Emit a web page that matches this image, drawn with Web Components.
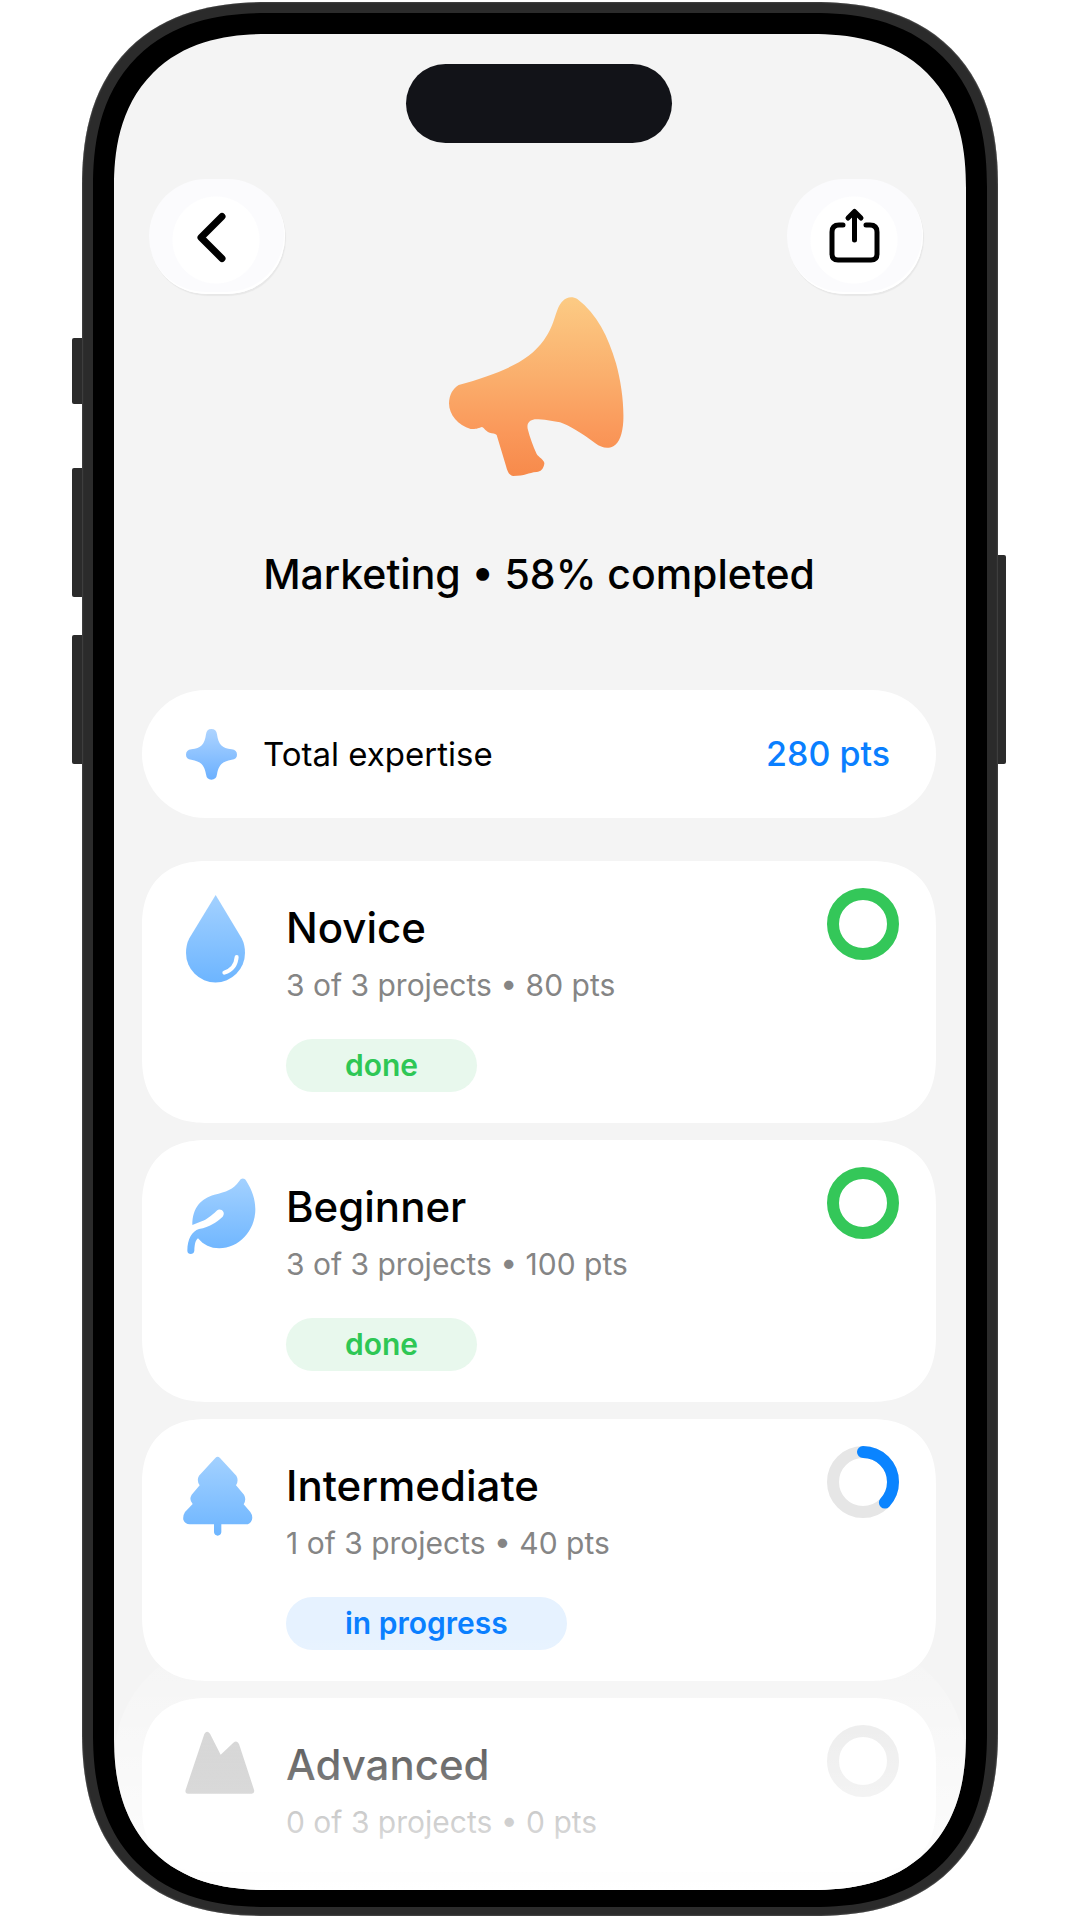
<!DOCTYPE html>
<html lang="en">
<head>
<meta charset="utf-8">
<meta name="viewport" content="width=device-width, initial-scale=1">
<title>Marketing</title>
<style>
  * { box-sizing: border-box; }

  body {
    margin: 0;
    height: 100vh;
    padding: 2px 82px 4px;
    background: #fff;
    color: #000;
    font-family: Inter, "Liberation Sans", sans-serif;
  }

  .levels {
    display: flex;
    flex-direction: column;
    gap: 17px;
    margin-top: 43px;
  }
</style>
</head>
<body>
<phone-frame>
  <nav-bar></nav-bar>
  <skill-hero>Marketing • 58% completed</skill-hero>
  <total-row points="280 pts">Total expertise</total-row>
  <div class="levels">
    <level-card icon="drop" state="done" progress="100">
      Novice
      <span slot="detail">3 of 3 projects • 80 pts</span>
      <span slot="badge">done</span>
    </level-card>
    <level-card icon="leaf" state="done" progress="100">
      Beginner
      <span slot="detail">3 of 3 projects • 100 pts</span>
      <span slot="badge">done</span>
    </level-card>
    <level-card icon="tree" state="active" progress="37">
      Intermediate
      <span slot="detail">1 of 3 projects • 40 pts</span>
      <span slot="badge">in progress</span>
    </level-card>
    <level-card icon="mountain" state="locked" progress="0">
      Advanced
      <span slot="detail">0 of 3 projects • 0 pts</span>
    </level-card>
  </div>
</phone-frame>

<script>
class PhoneFrame extends HTMLElement {
  constructor() {
    super();
    this.attachShadow({ mode: "open" });
  }

  static get styles() {
    return /* css */`
      * { box-sizing: border-box; }

      :host {
        display: block;
        height: 100%;
        position: relative;
      }

      .body {
        height: 100%;
        padding: 11px 11px 9px;
        border-radius: 160px;
        background: #2b2b2b;
        box-shadow: inset 0 0 2px #777;
        position: relative;
      }

      .bezel {
        height: 100%;
        padding: 21px 21px 17px;
        border-radius: 149px;
        background: #000;
      }

      .screen {
        height: 100%;
        padding: 30px 30px 0 28px;
        border-radius: 132px;
        background: #f4f4f4;
        overflow: hidden;
        position: relative;
      }

      /* softer, continuous corners where the browser has them */
      @supports (corner-shape: superellipse(1.25)) {
        .body, .bezel, .screen { corner-shape: superellipse(1.25); }
        .body { border-radius: 185px; }
        .bezel { border-radius: 174px; }
        .screen { border-radius: 154px; }
      }

      .island {
        width: 266px;
        height: 79px;
        margin: 0 auto 36px;
        border-radius: 40px;
        background: #121318;
      }

      /* content dissolves into white above the bottom edge */
      .fade {
        height: 250px;
        border-radius: 120px 120px 0 0;
        background: linear-gradient(#ffffff0d, #ffffff9e 74%, #fff);
        position: absolute;
        inset: auto 0 0;
        pointer-events: none;
      }

      .key {
        width: 12px;
        background: #2b2b2b;
        border-radius: 2px;
        position: absolute;
        left: -10px;
      }

      .action { top: 336px; height: 66px; }
      .up { top: 466px; height: 129px; }
      .down { top: 633px; height: 129px; }
      .power { top: 553px; height: 209px; left: auto; right: -8px; }
    `;
  }

  connectedCallback() {
    this.shadowRoot.innerHTML = /* html */`
    <style>${PhoneFrame.styles}</style>
    <div class="action key"></div>
    <div class="up key"></div>
    <div class="down key"></div>
    <div class="power key"></div>
    <div class="body">
      <div class="bezel">
        <main class="screen">
          <div class="island"></div>
          <slot></slot>
          <div class="fade"></div>
        </main>
      </div>
    </div>`;
  }
}

class NavBar extends HTMLElement {
  constructor() {
    super();
    this.attachShadow({ mode: "open" });
  }

  static get styles() {
    return /* css */`
      :host {
        display: flex;
        justify-content: space-between;
        padding: 0 13px 0 7px;
      }

      button {
        display: grid;
        place-items: center;
        width: 136px;
        height: 115px;
        padding: 0;
        border: 0;
        border-radius: 58px;
        background: radial-gradient(circle at 67px 61px, #fff 43px, #fbfbfd 44px);
        box-shadow: inset -1px -2px 1px #fff, 1px 2px 1px #0000000d;
      }

      svg {
        width: 60px;
        height: 60px;
        fill: none;
        stroke: #000;
        stroke-linecap: round;
        stroke-linejoin: round;
      }
    `;
  }

  connectedCallback() {
    this.shadowRoot.innerHTML = /* html */`
    <style>${NavBar.styles}</style>
    <button type="button" aria-label="Back">
      <svg viewBox="0 0 60 60" stroke-width="7"><path d="M35 9.500 14 30.500l21 21"/></svg>
    </button>
    <button type="button" aria-label="Share">
      <svg viewBox="0 0 60 60" stroke-width="5">
        <path d="M18 18h-4q-7 0-7 7v22q0 6 6 6h33q6 0 6-6V25q0-7-7-7h-4"/>
        <path d="M29.500 33V5M23 11l6.500-6.500L36 11"/>
      </svg>
    </button>`;
  }
}

class SkillHero extends HTMLElement {
  constructor() {
    super();
    this.attachShadow({ mode: "open" });
  }

  static get styles() {
    return /* css */`
      :host {
        display: flex;
        flex-direction: column;
        align-items: center;
        gap: 72px;
        padding: 2px 0 91px;
      }

      svg {
        width: 183px;
        height: 181px;
      }

      h1 {
        margin: 0;
        font-size: 41px;
        line-height: 50px;
        font-weight: 500;
        text-align: center;
      }
    `;
  }

  connectedCallback() {
    this.shadowRoot.innerHTML = /* html */`
    <style>${SkillHero.styles}</style>
    <svg viewBox="0 0 549 543" aria-hidden="true">
      <linearGradient id="glow" x2="0" y2="1">
        <stop offset="0" stop-color="#fccb84"/>
        <stop offset="0.45" stop-color="#faae6c"/>
        <stop offset="0.75" stop-color="#fa985a"/>
        <stop offset="1" stop-color="#f78a4b"/>
      </linearGradient>
      <path fill="url(#glow)" d="M32 267C150 234 240 200 288 132C325 80 320 38 345 14C356 2 374 0 388 9C448 55 480 120 504 202C519 256 528 320 526 374C524 414 514 440 496 451C478 460 460 455 442 442C400 410 366 390 336 379C310 375 290 370 260 370C244 373 236 382 239 398C246 425 255 450 266 474C272 484 290 492 289 503C286 520 278 526 266 528C240 530 232 540 195 540C184 538 179 529 174 510L146 417C140 412 134 412 125 410C110 404 110 396 102 393C92 396 86 400 68 399C30 388 3 356 3 322C4 296 14 278 32 267Z"/>
    </svg>
    <h1><slot></slot></h1>`;
  }
}

class TotalRow extends HTMLElement {
  constructor() {
    super();
    this.attachShadow({ mode: "open" });
  }

  static get styles() {
    return /* css */`
      :host {
        display: flex;
        align-items: center;
        gap: 26px;
        padding: 42px 46px 42px 44px;
        border-radius: 64px;
        background: #fff;
        font-size: 33px;
        line-height: 44px;
      }

      svg {
        width: 51px;
        height: 51px;
        margin: -4px 0;
      }

      .points {
        margin-left: auto;
        color: #0a7fff;
        font-size: 34px;
        font-weight: 500;
      }
    `;
  }

  connectedCallback() {
    this.shadowRoot.innerHTML = /* html */`
    <style>${TotalRow.styles}</style>
    <svg viewBox="0 0 153 153" aria-hidden="true">
      <linearGradient id="sky" x2="0" y2="1">
        <stop offset="0" stop-color="#aed4ff"/>
        <stop offset="1" stop-color="#6bb0ff"/>
      </linearGradient>
      <path fill="url(#sky)" d="M60 16Q62 0 76 0Q91 0 93 16C97 46 108 58 137 61Q153 63 153 77Q153 90 137 92C108 97 98 108 93 136Q91 152 76 152Q62 152 60 136C55 108 45 97 16 92Q0 90 0 77Q0 63 16 61C45 58 56 46 60 16Z"/>
    </svg>
    <span><slot></slot></span>
    <span class="points">${this.getAttribute("points")}</span>`;
  }
}

class ProgressRing extends HTMLElement {
  constructor() {
    super();
    this.attachShadow({ mode: "open" });
  }

  static get styles() {
    return /* css */`
      :host {
        display: block;
        width: 72px;
        height: 72px;
      }

      svg {
        display: block;
        fill: none;
        stroke-width: 12px;
        stroke-linecap: round;
        transform: rotate(-90deg);
      }

      .track { stroke: #e6e6e6; }
      .value { stroke: var(--ring, #0a84ff); }
    `;
  }

  connectedCallback() {
    const value = Number(this.getAttribute("value"));
    const track = value < 100 ? `<circle class="track" cx="36" cy="36" r="30"/>` : "";
    const arc = value > 0
      ? `<circle class="value" cx="36" cy="36" r="30" pathLength="100" stroke-dasharray="${value} 100"/>`
      : "";

    this.shadowRoot.innerHTML = /* html */`
    <style>${ProgressRing.styles}</style>
    <svg viewBox="0 0 72 72" role="img" aria-label="${value}%">
      ${track}
      ${arc}
    </svg>`;
  }
}

const icons = {
  drop: `
    <path d="M92 0 170 130Q180 149 180 174A88 88 0 0 1 3 174Q3 149 13 130Z"/>
    <path d="M155 186Q152 222 118 233" fill="none" stroke="#fff" stroke-width="12" stroke-linecap="round"/>`,
  leaf: `
    <path d="M163 21C170 11 178 12 184 21C201 48 211 76 211 106C211 172 160 223 103 223C76 223 56 213 39 193C30 200 29 214 28 230C27 243 7 243 7 230C7 195 21 172 42 165C76 158 92 146 113 128C124 114 106 100 95 110C78 126 68 134 50 142L22 153C22 100 48 74 88 62C124 54 144 47 163 21Z"/>`,
  tree: `
    <path d="M91 15Q98 8 105 15L154 68Q162 82 153 97L177 125Q185 140 176 154L196 177Q204 188 201 200Q196 214 182 214H109V238Q107 248 98 248Q89 248 87 238V214H14Q0 213-5 200Q-7 188 0 177L23 153Q11 140 20 125L44 97Q34 82 42 68Z"/>`,
  mountain: `
    <path d="M58 6Q66-7 75 5L107 68 145 32Q156 23 162 36L207 173Q210 185 200 185H9Q-1 185 2 173Z"/>`,
};

class LevelCard extends HTMLElement {
  constructor() {
    super();
    this.attachShadow({ mode: "open" });
  }

  static get styles() {
    return /* css */`
      :host {
        --accent: #2ec755;
        --tint: #e8f8ed;
        --ring: #34c759;
        --top: #a3d1ff;
        --bottom: #6db5ff;

        display: flex;
        align-items: flex-start;
        gap: 31px;
        padding: 0 37px 31px 43px;
        border-radius: 56px;
        background: #fff;
      }

      @supports (corner-shape: superellipse(1.25)) {
        :host {
          border-radius: 66px;
          corner-shape: superellipse(1.25);
        }
      }

      :host([state="active"]) {
        --accent: #0a7fff;
        --tint: #e6f2ff;
        --ring: #0a84ff;
      }

      :host([state="locked"]) {
        --top: #c4c4c4;
        --bottom: #b0b0b0;
      }

      .icon {
        flex: none;
        width: 70px;
        height: 88px;
        margin-top: 34px;
        overflow: visible;
      }

      .text {
        flex: 1;
        margin-top: 42px;
      }

      h2, p { margin: 0; }

      h2 {
        font-size: 42px;
        line-height: 50px;
        font-weight: 500;
      }

      p {
        margin-top: 13px;
        font-size: 30px;
        line-height: 38px;
        color: #858585;
      }

      .badge {
        display: inline-block;
        margin-top: 35px;
        padding: 0 59px;
        border-radius: 27px;
        font-size: 30px;
        line-height: 53px;
        font-weight: 600;
        vertical-align: top;
        color: var(--accent);
        background: var(--tint);
      }

      :host([state="locked"]) .badge { display: none; }

      progress-ring { margin-top: 27px; }
    `;
  }

  connectedCallback() {
    this.shadowRoot.innerHTML = /* html */`
    <style>${LevelCard.styles}</style>
    <svg class="icon" viewBox="0 0 210 264" aria-hidden="true">
      <linearGradient id="fill" x2="0" y2="1">
        <stop offset="0" style="stop-color: var(--top)"/>
        <stop offset="1" style="stop-color: var(--bottom)"/>
      </linearGradient>
      <g fill="url(#fill)">${icons[this.getAttribute("icon")]}</g>
    </svg>
    <div class="text">
      <h2><slot></slot></h2>
      <p><slot name="detail"></slot></p>
      <div class="badge"><slot name="badge"></slot></div>
    </div>
    <progress-ring value="${this.getAttribute("progress")}"></progress-ring>`;
  }
}

customElements.define("phone-frame", PhoneFrame);
customElements.define("nav-bar", NavBar);
customElements.define("skill-hero", SkillHero);
customElements.define("total-row", TotalRow);
customElements.define("progress-ring", ProgressRing);
customElements.define("level-card", LevelCard);
</script>
</body>
</html>
